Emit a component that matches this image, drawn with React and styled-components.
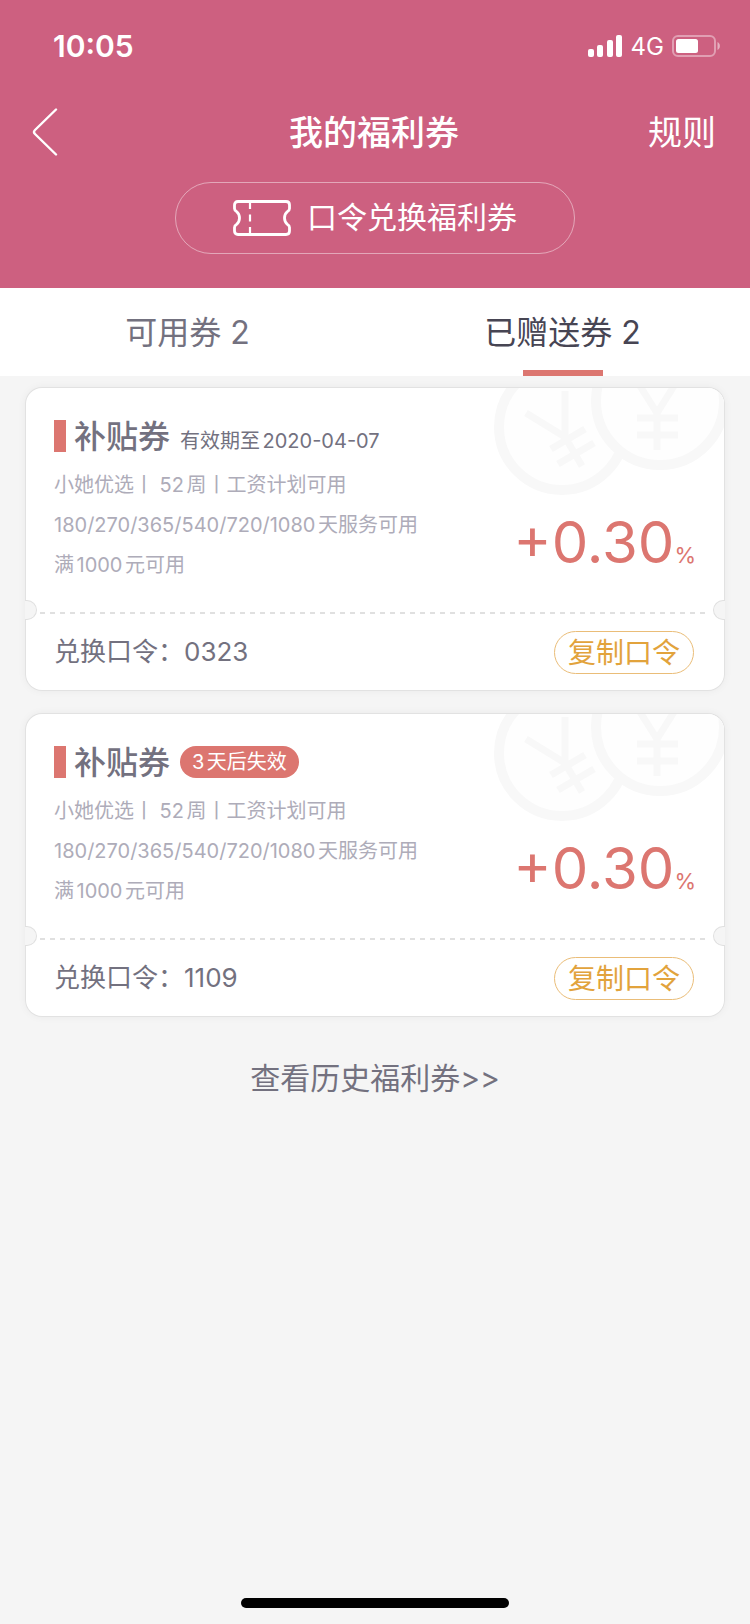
import styled, { createGlobalStyle } from "styled-components";

const coupons = [
  { id: 1, name: "补贴券", validity: "有效期至2020-04-07", rate: "+0.30", code: "0323" },
  { id: 2, name: "补贴券", badge: "3天后失效", rate: "+0.30", code: "1109" },
];

const conditions = [
  "小她优选丨 52周丨工资计划可用",
  "180/270/365/540/720/1080天服务可用",
  "满1000元可用",
];

const StatusBar = () => (
  <StyledStatusBar>
    <Time>10:05</Time>
    <Signals>
      <svg width="35" height="22" viewBox="0 0 35 22" fill="#fff">
        <rect x="0" y="14" width="6" height="8" rx="2" />
        <rect x="9" y="10" width="6" height="12" rx="2" />
        <rect x="19" y="5" width="6" height="17" rx="2" />
        <rect x="28" y="0" width="6" height="22" rx="2" />
      </svg>
      <span>4G</span>
      <svg width="49" height="22" viewBox="0 0 49 22" fill="none">
        <rect x="1" y="1" width="42" height="20" rx="5" stroke="#fff" strokeOpacity="0.4" strokeWidth="2" />
        <rect x="4" y="4" width="22" height="14" rx="2.5" fill="#fff" />
        <path d="M45.5 7c3.2 1.4 3.2 6.6 0 8z" fill="#fff" fillOpacity="0.5" />
      </svg>
    </Signals>
  </StyledStatusBar>
);

const TicketIcon = () => (
  <svg width="58" height="36" viewBox="0 0 58 36" fill="none" stroke="#fff">
    <path
      d="M5 1.5H53Q56.5 1.5 56.5 5V8.5Q56.5 10.5 54.5 11.5Q51.5 14 51.5 18Q51.5 22 54.5 24.5Q56.5 25.5 56.5 27.5V31Q56.5 34.5 53 34.5H5Q1.5 34.5 1.5 31V27.5Q1.5 25.5 3.5 24.5Q6.5 22 6.5 18Q6.5 14 3.5 11.5Q1.5 10.5 1.5 8.5V5Q1.5 1.5 5 1.5Z"
      strokeWidth="2.8"
      strokeLinejoin="round"
    />
    <path d="M17 3V9M17 14.5V21.5M17 27V33" strokeWidth="2.2" />
  </svg>
);

const Coins = () => (
  <Watermark width="240" height="110" viewBox="0 0 240 110" aria-hidden="true">
    <g fill="#fefefe" stroke="#f8f8f8" strokeWidth="10">
      <circle cx="78" cy="39" r="63" />
      <path d="M42 25L81 49V3M81 49L98 78M67 61L101 41M74 76L110 55" fill="none" strokeWidth="7" />
      <circle cx="176" cy="13" r="64" />
      <path d="M151 -10L173 25L195 -10M173 25V62M153 30H194M153 47H194" fill="none" strokeWidth="7" />
    </g>
  </Watermark>
);

const Coupon = ({ name, validity, badge, rate, code }) => (
  <Card>
    <Coins />
    <Body>
      <div>
        <TitleRow>
          <Marker />
          <h2>{name}</h2>
          {validity && <Validity>{validity}</Validity>}
          {badge && <Badge>{badge}</Badge>}
        </TitleRow>
        <Conditions>
          {conditions.map((text) => (
            <li key={text}>{text}</li>
          ))}
        </Conditions>
      </div>
      <Rate>
        {rate}
        <small>%</small>
      </Rate>
    </Body>
    <Tear>
      <Notch $side="left" />
      <Notch $side="right" />
    </Tear>
    <Footer>
      <span>兑换口令：{code}</span>
      <CopyButton type="button">复制口令</CopyButton>
    </Footer>
  </Card>
);

const App = () => {
  return (
    <Page>
      <GlobalStyle />
      <Header>
        <StatusBar />
        <Nav>
          <BackButton type="button" aria-label="返回">
            <svg width="26" height="48" viewBox="0 0 26 48" fill="none" stroke="#fff">
              <path d="M24 1.5L3 22Q1 24 3 26L24 46.5" strokeWidth="2.4" strokeLinecap="round" />
            </svg>
          </BackButton>
          <h1>我的福利券</h1>
          <a href="#rules">规则</a>
        </Nav>
        <RedeemButton type="button">
          <TicketIcon />
          <span>口令兑换福利券</span>
        </RedeemButton>
      </Header>
      <Tabs role="tablist">
        <Tab type="button" role="tab" aria-selected="false">
          可用券 2
        </Tab>
        <Tab type="button" role="tab" aria-selected="true" $active>
          已赠送券 2
        </Tab>
      </Tabs>
      <List>
        {coupons.map((coupon) => (
          <Coupon key={coupon.id} {...coupon} />
        ))}
      </List>
      <HistoryLink href="#history">查看历史福利券&gt;&gt;</HistoryLink>
      <HomeIndicator />
    </Page>
  );
};

const GlobalStyle = createGlobalStyle`
  * {
    margin: 0;
    padding: 0;
    box-sizing: border-box;
  }

  body {
    background: #f5f5f5;
    color: #73717f;
    font-family: Inter, "Noto Sans CJK SC", sans-serif;
    text-autospace: normal;
  }

  button {
    background: none;
    border: none;
    color: inherit;
    font: inherit;
    cursor: pointer;
  }

  a {
    color: inherit;
    text-decoration: none;
  }

  svg {
    display: block;
  }
`;

const Page = styled.div`
  min-height: 100vh;
  display: flex;
  flex-direction: column;
`;

const Header = styled.header`
  background: #cd6080;
  color: #fff;
  padding-bottom: 34px;
`;

const StyledStatusBar = styled.div`
  height: 88px;
  padding: 4px 29px 0 53px;
  display: flex;
  justify-content: space-between;
  align-items: center;
`;

const Time = styled.span`
  font-size: 30px;
  font-weight: 600;
`;

const Signals = styled.div`
  display: flex;
  align-items: center;
  gap: 8px;
  font-size: 24px;
`;

const Nav = styled.nav`
  height: 88px;
  padding: 0 34px 0 32px;
  display: grid;
  grid-template-columns: 1fr auto 1fr;
  align-items: center;
  font-size: 34px;
  line-height: 48px;
  h1 {
    padding-top: 2px;
    font-size: 34px;
    font-weight: 500;
  }
  a {
    padding-top: 2px;
    justify-self: end;
  }
`;

const BackButton = styled.button`
  justify-self: start;
`;

const RedeemButton = styled.button`
  width: 400px;
  max-width: 90%;
  height: 72px;
  margin: 6px auto 0;
  display: flex;
  align-items: center;
  justify-content: center;
  gap: 16px;
  border: 1px solid rgba(255, 255, 255, 0.45);
  border-radius: 36px;
  font-size: 30px;
  line-height: 40px;
  span {
    padding-bottom: 2px;
  }
`;

const Tabs = styled.div`
  height: 88px;
  display: grid;
  grid-template-columns: 1fr 1fr;
  background: #fff;
`;

const Tab = styled.button`
  position: relative;
  padding-bottom: 4px;
  font-size: 32px;
  color: ${({ $active }) => ($active ? "#474553" : "#73717f")};
  &::after {
    content: "";
    display: ${({ $active }) => ($active ? "block" : "none")};
    position: absolute;
    bottom: 0;
    left: 50%;
    width: 80px;
    height: 6px;
    margin-left: -40px;
    background: #dc7670;
  }
`;

const List = styled.main`
  padding: 12px 26px 0;
  display: flex;
  flex-direction: column;
  gap: 24px;
`;

const Card = styled.article`
  position: relative;
  background: #fff;
  border-radius: 16px;
  box-shadow: 0 0 0 1px #e2e2e2, 0 0 10px rgba(0, 0, 0, 0.06);
`;

const Watermark = styled.svg`
  position: absolute;
  top: 0;
  right: 0;
  border-radius: 0 16px 0 0;
`;

const Body = styled.div`
  position: relative;
  padding: 32px 28px 27px;
  display: flex;
  justify-content: space-between;
  align-items: flex-end;
`;

const TitleRow = styled.div`
  height: 32px;
  display: flex;
  align-items: center;
  h2 {
    margin: 0 10px 0 8px;
    padding-top: 2px;
    font-size: 32px;
    font-weight: 500;
    line-height: 32px;
  }
`;

const Marker = styled.span`
  width: 12px;
  height: 32px;
  background: #dc7670;
`;

const Validity = styled.span`
  align-self: flex-end;
  font-size: 20px;
  line-height: 22px;
`;

const Badge = styled.span`
  padding: 0 12px;
  border-radius: 16px;
  background: #dc7670;
  color: #fff;
  font-size: 20px;
  line-height: 32px;
`;

const Conditions = styled.ul`
  margin-top: 13px;
  list-style: none;
  color: #aeacb9;
  font-size: 20px;
  line-height: 40px;
`;

const Rate = styled.strong`
  color: #dc7670;
  font-size: 58px;
  font-weight: 400;
  line-height: 60px;
  small {
    font-size: 22px;
  }
`;

const Tear = styled.div`
  position: relative;
  height: 2px;
  margin: 0 14px;
  background: repeating-linear-gradient(90deg, #e0e0e0 0 5px, transparent 5px 10px);
`;

const Notch = styled.span`
  position: absolute;
  top: -12px;
  ${({ $side }) => $side}: -15px;
  width: 12px;
  height: 20px;
  background: #f5f5f5;
  border: 1px solid #e0e0e0;
  border-${({ $side }) => $side}: none;
  border-radius: ${({ $side }) => ($side === "left" ? "0 10px 10px 0" : "10px 0 0 10px")};
`;

const Footer = styled.div`
  height: 76px;
  padding: 0 30px 0 28px;
  display: flex;
  justify-content: space-between;
  align-items: center;
  font-size: 26px;
  line-height: 36px;
`;

const CopyButton = styled.button`
  width: 140px;
  height: 43px;
  border: 1px solid #eabd78;
  border-radius: 22px;
  color: #e2a33c;
  font-size: 28px;
  line-height: 42px;
`;

const HistoryLink = styled.a`
  align-self: center;
  margin-top: 40px;
  font-size: 30px;
  line-height: 44px;
`;

const HomeIndicator = styled.div`
  width: 268px;
  height: 10px;
  margin: auto auto 16px;
  border-radius: 5px;
  background: #000;
`;

export default App;
